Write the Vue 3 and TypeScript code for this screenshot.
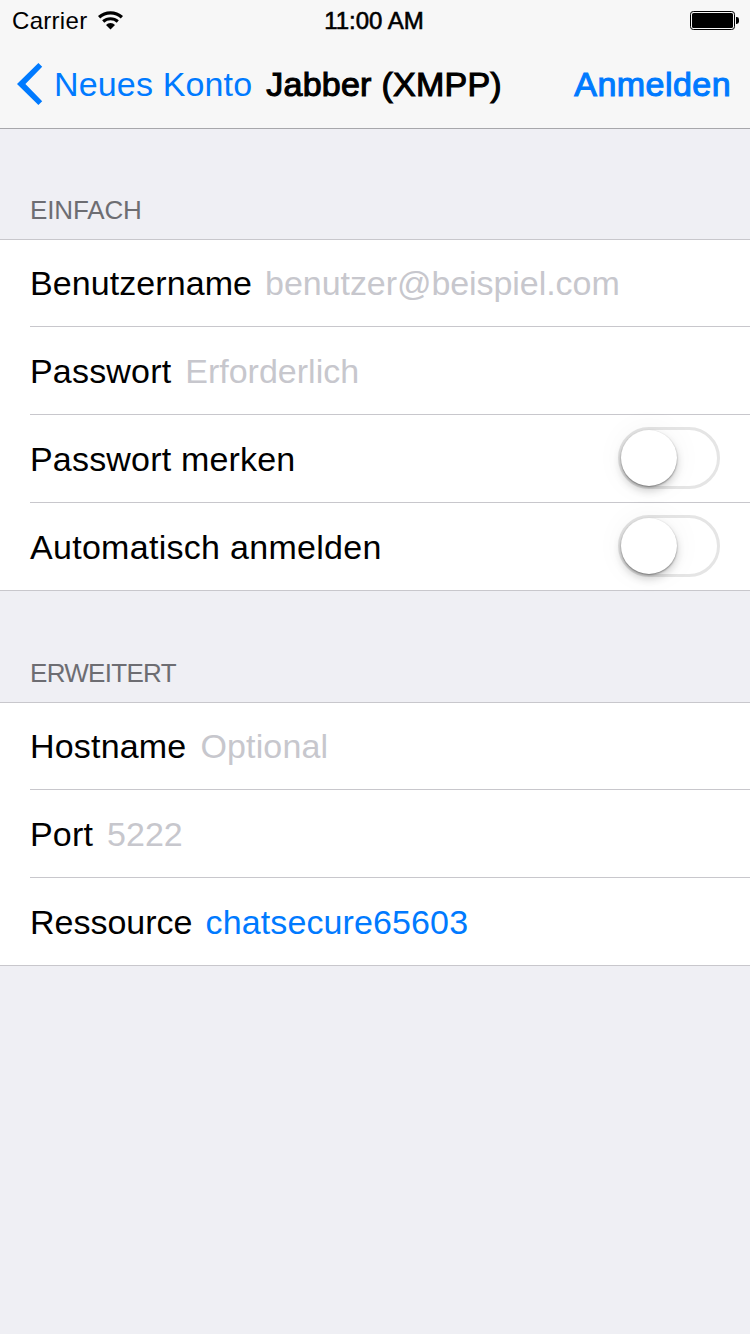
<script setup lang="ts">
import { ref } from 'vue'

interface Row {
  id: string
  label: string
  value?: string
  filled?: boolean
  toggle?: boolean
}

interface Section {
  title: string
  rows: Row[]
}

const sections: Section[] = [
  {
    title: 'EINFACH',
    rows: [
      { id: 'username', label: 'Benutzername', value: 'benutzer@beispiel.com' },
      { id: 'password', label: 'Passwort', value: 'Erforderlich' },
      { id: 'remember', label: 'Passwort merken', toggle: true },
      { id: 'auto-login', label: 'Automatisch anmelden', toggle: true },
    ],
  },
  {
    title: 'ERWEITERT',
    rows: [
      { id: 'hostname', label: 'Hostname', value: 'Optional' },
      { id: 'port', label: 'Port', value: '5222' },
      { id: 'resource', label: 'Ressource', value: 'chatsecure65603', filled: true },
    ],
  },
]

const switches = ref<Record<string, boolean>>({ remember: false, 'auto-login': false })

function flip(id: string): void {
  switches.value[id] = !switches.value[id]
}
</script>

<template>
  <main class="screen">
    <header class="top">
      <div class="status">
        <div class="carrier">
          <span class="carrier-name">Carrier</span>
          <svg class="wifi" width="26" height="19" viewBox="0 0 26 19">
            <path d="M1.1 6.2 A17 17 0 0 1 23.9 6.2" fill="none" stroke="#000" stroke-width="3.3" />
            <path d="M5.2 10.5 A11 11 0 0 1 19.8 10.5" fill="none" stroke="#000" stroke-width="3.1" />
            <path d="M12.5 18.5 L8 14 A6 6 0 0 1 17 14 Z" fill="#000" />
          </svg>
        </div>
        <span class="clock">11:00 AM</span>
        <svg class="battery" width="50" height="19" viewBox="0 0 50 19">
          <rect x="0.5" y="0.5" width="44" height="18" rx="2.8" fill="none" stroke="#000" />
          <rect x="2" y="2" width="41" height="15" rx="1.6" fill="#000" />
          <path d="M46 6 h0.6 a2.4 2.4 0 0 1 2.4 2.4 v2.2 a2.4 2.4 0 0 1 -2.4 2.4 h-0.6 z" fill="#000" />
        </svg>
      </div>
      <nav class="nav">
        <a class="back">
          <svg class="chevron" width="26" height="42" viewBox="0 0 26 42">
            <path d="M21.4 0 L25.2 3.8 L8.4 21 L25.2 38.2 L21.4 42 L0 21 Z" fill="#007aff" />
          </svg>
          <span class="back-label">Neues Konto</span>
        </a>
        <h1 class="title">Jabber (XMPP)</h1>
        <a class="login">Anmelden</a>
      </nav>
    </header>

    <section v-for="section in sections" :key="section.title" class="section">
      <h2 class="section-title" :class="section.title.toLowerCase()">{{ section.title }}</h2>
      <div class="group">
        <div v-for="row in section.rows" :key="row.id" class="row" :class="row.id">
          <span class="label">{{ row.label }}</span>
          <span v-if="row.value" class="value" :class="{ filled: row.filled }">{{ row.value }}</span>
          <button
            v-if="row.toggle"
            class="switch"
            :class="{ on: switches[row.id] }"
            role="switch"
            :aria-checked="switches[row.id]"
            :aria-label="row.label"
            @click="flip(row.id)"
          >
            <span class="knob"></span>
          </button>
        </div>
      </div>
    </section>
  </main>
</template>

<style>
body {
  background: #efeff4;
}
</style>

<style scoped>
.screen {
  box-sizing: border-box;
  width: 750px;
  height: 1334px;
  overflow: hidden;
  background: #efeff4;
  color: #000;
  font-family: "Liberation Sans", Arial, sans-serif;
  font-size: 34px;
  line-height: 40px;
}

.top {
  box-sizing: border-box;
  height: 129px;
  background: #f7f7f7;
  border-bottom: 1px solid #a7a7ab;
}

.status {
  display: grid;
  grid-template-columns: 1fr auto 1fr;
  align-items: center;
  height: 40px;
  padding: 0 10px 0 12px;
  font-size: 24px;
  line-height: 38px;
}

.carrier {
  display: flex;
  align-items: center;
  gap: 11px;
}

.carrier-name {
  padding-top: 2px;
  letter-spacing: 0.3px;
}

.clock {
  margin-right: 4px;
  padding-top: 2px;
  -webkit-text-stroke: 0.6px #000;
}

.battery {
  justify-self: end;
}

.nav {
  display: flex;
  align-items: center;
  height: 88px;
  padding: 0 19px 0 17px;
}

.back {
  display: flex;
  align-items: center;
  gap: 11px;
  color: #007aff;
  letter-spacing: 0.15px;
}

.title {
  margin: 0 0 0 14px;
  font-size: 34px;
  font-weight: 400;
  letter-spacing: 0.25px;
  -webkit-text-stroke: 1.1px #000;
}

.login {
  margin-left: auto;
  color: #007aff;
  letter-spacing: 0.45px;
  -webkit-text-stroke: 1.1px #007aff;
}

.section-title {
  display: flex;
  align-items: flex-end;
  box-sizing: border-box;
  height: 111px;
  margin: 0;
  padding: 0 30px 14px;
  color: #6d6d72;
  font-size: 26px;
  font-weight: 400;
  letter-spacing: -0.7px;
  line-height: 30px;
}

.section-title.einfach {
  height: 110px;
  letter-spacing: -0.15px;
}

.group {
  background: #fff;
  box-shadow: inset 0 1px #c8c7cc, inset 0 -1px #c8c7cc;
}

.row {
  display: flex;
  align-items: center;
  box-sizing: border-box;
  height: 88px;
  margin-left: 30px;
  padding-right: 30px;
  border-bottom: 1px solid #c8c7cc;
}

.row:last-child {
  border-bottom-color: transparent;
}

.label {
  letter-spacing: 0.18px;
}

.username .label {
  letter-spacing: 0.08px;
}

.auto-login .label {
  letter-spacing: 0.29px;
}

.resource .label {
  letter-spacing: 0;
}

.value {
  margin-left: 14px;
  color: #c7c7cd;
}

.username .value {
  margin-left: 13px;
  letter-spacing: -0.06px;
}

.hostname .value {
  letter-spacing: 0.15px;
}

.resource .value {
  margin-left: 13px;
  letter-spacing: 0.12px;
}

.value.filled {
  color: #007aff;
}

.switch {
  display: flex;
  box-sizing: border-box;
  width: 102px;
  height: 62px;
  margin: 0 0 1px auto;
  padding: 0;
  border: 3px solid #e5e5e5;
  border-radius: 31px;
  background: #fff;
}

.switch.on {
  justify-content: flex-end;
  border-color: #4cd964;
  background: #4cd964;
}

.knob {
  width: 56px;
  height: 56px;
  border-radius: 50%;
  background: #fff;
  box-shadow: 0 1px 2px rgba(0, 0, 0, 0.42), 0 5px 9px rgba(0, 0, 0, 0.18), 0 0 30px rgba(0, 0, 0, 0.05);
}
</style>
